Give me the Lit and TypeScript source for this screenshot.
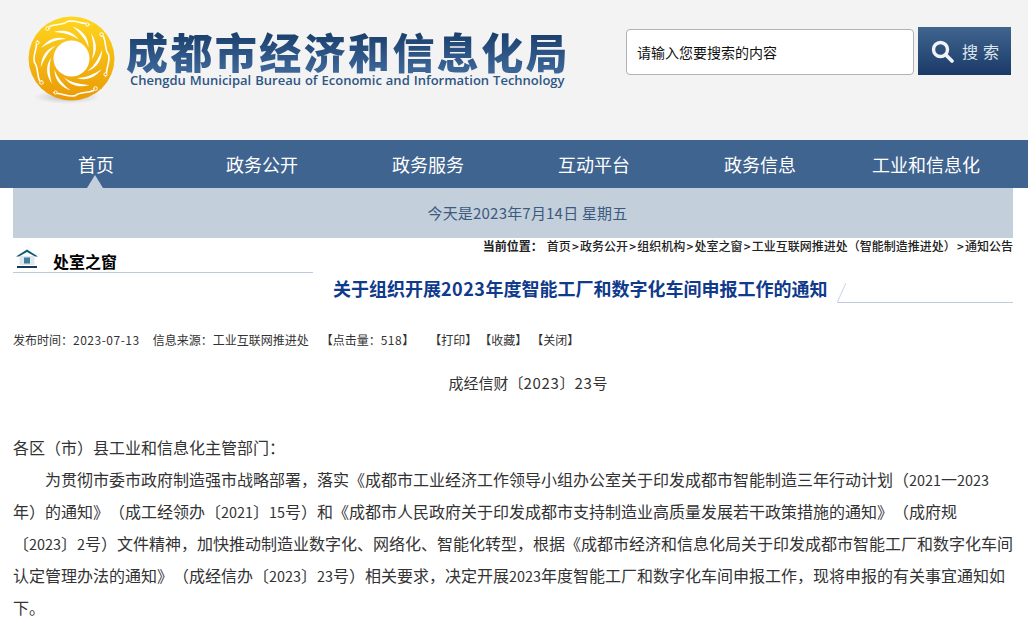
import { LitElement, html, css, svg } from "lit";
import { customElement } from "lit/decorators.js";

const NAV = ["首页", "政务公开", "政务服务", "互动平台", "政务信息", "工业和信息化"];
const BLADES = Array.from({ length: 10 }, (_, i) => i * 36);
const RING = [0, 90, 180, 270];

@customElement("app-root")
export class AppRoot extends LitElement {
  static styles = css`
    :host {
      display: block;
      height: 620px;
      overflow: hidden;
      background: #fff;
      font-family: "Noto Sans CJK SC", "Noto Sans", sans-serif;
      color: #333;
      text-spacing-trim: space-all;
    }
    .header {
      height: 140px;
      background: #f3f3f3;
      display: flex;
      align-items: flex-start;
      box-sizing: border-box;
      padding-left: 24px;
    }
    .logo { margin-top: 12px; flex: none; display: block; }
    .brand { margin: 28px 0 0 2px; width: 450px; flex: none; }
    .brand-cn {
      font-size: 42px;
      line-height: 46px;
      height: 46px;
      font-weight: 900;
      letter-spacing: 2.4px;
      white-space: nowrap;
      background: linear-gradient(#1c416f 15%, #3b6596 90%);
      -webkit-background-clip: text;
      background-clip: text;
      color: transparent;
    }
    .brand-en {
      font-family: "Open Sans", sans-serif;
      font-size: 13px;
      line-height: 12px;
      margin-left: 4px;
      color: #2e5685;
      font-weight: 600;
      word-spacing: 0.6px;
      white-space: nowrap;
    }
    .search { display: flex; margin: 27px 0 0 50px; align-items: flex-start; gap: 4px; }
    .input {
      margin-top: 2px;
      width: 288px;
      height: 46px;
      box-sizing: border-box;
      border: 1px solid #b2b2b2;
      border-radius: 4px;
      background: #fff;
      padding-left: 10px;
      font-size: 14px;
      line-height: 44px;
      color: #111;
    }
    .btn {
      width: 93px;
      height: 48px;
      background: linear-gradient(#40658f, #1a3a67);
      display: flex;
      align-items: center;
      padding-left: 13px;
      box-sizing: border-box;
      color: #dfe5ec;
      font-size: 16px;
      letter-spacing: 5px;
      gap: 8px;
    }
    .nav {
      height: 48px;
      background: #3f6490;
      display: flex;
      padding-left: 13px;
    }
    .nav a {
      width: 166px;
      flex: none;
      text-align: center;
      color: #fff;
      font-size: 18px;
      line-height: 48px;
      position: relative;
    }
    .nav a.on::after {
      content: "";
      position: absolute;
      left: 74px;
      bottom: 0;
      border: 8px solid transparent;
      border-top: 0;
      border-bottom: 13px solid #c3cfdb;
    }
    .wrap { padding: 0 15px 0 13px; }
    .date {
      height: 50px;
      background: #c3cfdb;
      color: #3c5a80;
      font-size: 15px;
      line-height: 50px;
      letter-spacing: 0.2px;
      text-align: center;
      padding-left: 29px;
      box-sizing: border-box;
    }
    .top { display: flex; justify-content: space-between; height: 35px; }
    .side {
      width: 300px;
      height: 35px;
      box-sizing: border-box;
      border-bottom: 1px solid #bccbe3;
      display: flex;
      align-items: flex-end;
    }
    .side svg { margin: 0 0 3px 2px; display: block; }
    .side b {
      font-size: 16px;
      line-height: 20px;
      margin: 0 0 1px 14px;
      color: #000;
      font-weight: 700;
    }
    .crumb {
      font-size: 12px;
      line-height: 16px;
      color: #222;
      font-weight: 500;
      white-space: nowrap;
    }
    .crumb strong { font-weight: 700; margin-right: 4px; }
    .crumb i { font-style: normal; margin: 0 1.2px; }
    .title-row { display: flex; height: 30px; }
    .title-row h1 {
      margin: 0 0 0 320px;
      font-size: 18px;
      line-height: 30px;
      font-weight: 700;
      color: #103a8c;
      white-space: nowrap;
    }
    .deco {
      flex: 1;
      margin-left: 10px;
      border-bottom: 1px solid #bccbe3;
      height: 29px;
      position: relative;
    }
    .deco::before {
      content: "";
      position: absolute;
      left: 0;
      bottom: -1px;
      width: 9px;
      height: 20px;
      background: linear-gradient(to top left, transparent 46%, #c9d3e4 48%, #e6ebf3 54%, transparent 56%);
    }
    .meta {
      margin-top: 27px;
      font-size: 12px;
      line-height: 20px;
      color: #333;
      white-space: nowrap;
      display: flex;
    }
    .meta .date-m { margin-right: 13px; }
    .meta .src { margin-right: 12px; }
    .meta .hits { margin-right: 15px; }
    .meta .print { margin-right: 2px; }
    .meta .fav { margin-right: 4px; }
    .num { letter-spacing: 0.5px; }
    .doc {
      text-align: center;
      font-size: 15px;
      line-height: 24px;
      margin: 21px 0 0 30px;
    }
    .doc .num { letter-spacing: 0.7px; }
    .article { margin-top: 36px; width: 1000px; font-size: 16px; line-height: 32px; color: #333; }
    .article p { margin: 0; }
    .article .in { text-indent: 32px; }
    .article .num { font-size: 14.4px; line-height: 0; letter-spacing: 0; }
  `;

  private logo() {
    return html`<svg class="logo" width="100" height="96" viewBox="0 0 100 96">
      <defs>
        <linearGradient id="g" x1="0" y1="0" x2="0" y2="1">
          <stop offset="0" stop-color="#ffd71f"></stop>
          <stop offset="1" stop-color="#ea9a06"></stop>
        </linearGradient>
        <radialGradient id="s">
          <stop offset="0" stop-color="#9a9a9a" stop-opacity=".7"></stop>
          <stop offset="1" stop-color="#bbb" stop-opacity="0"></stop>
        </radialGradient>
      </defs>
      <ellipse cx="43" cy="85" rx="34" ry="7" fill="url(#s)"></ellipse>
      <ellipse cx="47.500" cy="46.500" rx="43" ry="42" fill="url(#g)"></ellipse>
      <g transform="translate(47.500 46.500)">
        <circle r="18" fill="#fff"></circle>
        ${BLADES.map(
          (a) => svg`<path transform="rotate(${a})" d="M1 -32C9 -29 17 -23 17 -11C14 -20 8 -26 1 -32Z" fill="#fff"></path>`
        )}
        ${RING.map(
          (a) => svg`<g transform="rotate(${a})" fill="none" stroke="#fff" stroke-linecap="round">
            <path d="M-22 -32C-15 -35 -9 -33 -4 -37C2 -39 9 -35 14 -35" stroke-width="1.600"></path>
            <circle cx="-24" cy="-30" r="1.800" stroke-width="1"></circle>
            <circle cx="16" cy="-34" r="1.600" stroke-width="1"></circle>
          </g>`
        )}
      </g>
    </svg>`;
  }

  render() {
    return html`
      <div class="header">
        ${this.logo()}
        <div class="brand">
          <div class="brand-cn">成都市经济和信息化局</div>
          <div class="brand-en">Chengdu Municipal Bureau of Economic and Information Technology</div>
        </div>
        <div class="search">
          <div class="input">请输入您要搜索的内容</div>
          <div class="btn">
            <svg width="23" height="23" viewBox="0 0 23 23" fill="none" stroke="#f1f3f6">
              <circle cx="9.500" cy="9.500" r="7" stroke-width="3.400"></circle>
              <path d="M15 15l6 6" stroke-width="3.600" stroke-linecap="round"></path>
            </svg>
            <span>搜索</span>
          </div>
        </div>
      </div>
      <nav class="nav">
        ${NAV.map((n, i) => html`<a class=${i === 0 ? "on" : ""}>${n}</a>`)}
      </nav>
      <div class="wrap">
        <div class="date">今天是2023年7月14日 星期五</div>
        <div class="top">
          <div class="side">
            <svg width="24" height="21" viewBox="0 0 24 21">
              <path d="M1 8.500L12 1.500L23 8.500L20 8.500L12 4L4 8.500Z" fill="#0f5a78"></path>
              <rect x="4.500" y="8" width="15" height="9" fill="#dfe7ec"></rect>
              <rect x="9" y="9.500" width="6" height="6" fill="#3f7f9c"></rect>
              <rect x="2" y="18" width="20" height="2" fill="#123a55"></rect>
            </svg>
            <b>处室之窗</b>
          </div>
          <div class="crumb">
            <strong>当前位置：</strong>首页<i>&gt;</i>政务公开<i>&gt;</i>组织机构<i>&gt;</i>处室之窗<i>&gt;</i>工业互联网推进处（智能制造推进处）<i>&gt;</i>通知公告
          </div>
        </div>
        <div class="title-row">
          <h1>关于组织开展<span class="num">2023</span>年度智能工厂和数字化车间申报工作的通知</h1>
          <div class="deco"></div>
        </div>
        <div class="meta">
          <span class="date-m">发布时间：<span class="num">2023-07-13</span></span>
          <span class="src">信息来源：工业互联网推进处</span>
          <span class="hits">【点击量：<span class="num">518</span>】</span>
          <span class="print">【打印】</span>
          <span class="fav">【收藏】</span>
          <span>【关闭】</span>
        </div>
        <div class="doc">成经信财〔<span class="num">2023</span>〕<span class="num">23</span>号</div>
        <div class="article">
          <p>各区（市）县工业和信息化主管部门：</p>
          <p class="in">为贯彻市委市政府制造强市战略部署，落实《成都市工业经济工作领导小组办公室关于印发成都市智能制造三年行动计划（<span class="num">2021</span>一<span class="num">2023</span>年）的通知》（成工经领办〔<span class="num">2021</span>〕<span class="num">15</span>号）和《成都市人民政府关于印发成都市支持制造业高质量发展若干政策措施的通知》（成府规〔<span class="num">2023</span>〕<span class="num">2</span>号）文件精神，加快推动制造业数字化、网络化、智能化转型，根据《成都市经济和信息化局关于印发成都市智能工厂和数字化车间认定管理办法的通知》（成经信办〔<span class="num">2023</span>〕<span class="num">23</span>号）相关要求，决定开展<span class="num">2023</span>年度智能工厂和数字化车间申报工作，现将申报的有关事宜通知如下。</p>
        </div>
      </div>
    `;
  }
}
